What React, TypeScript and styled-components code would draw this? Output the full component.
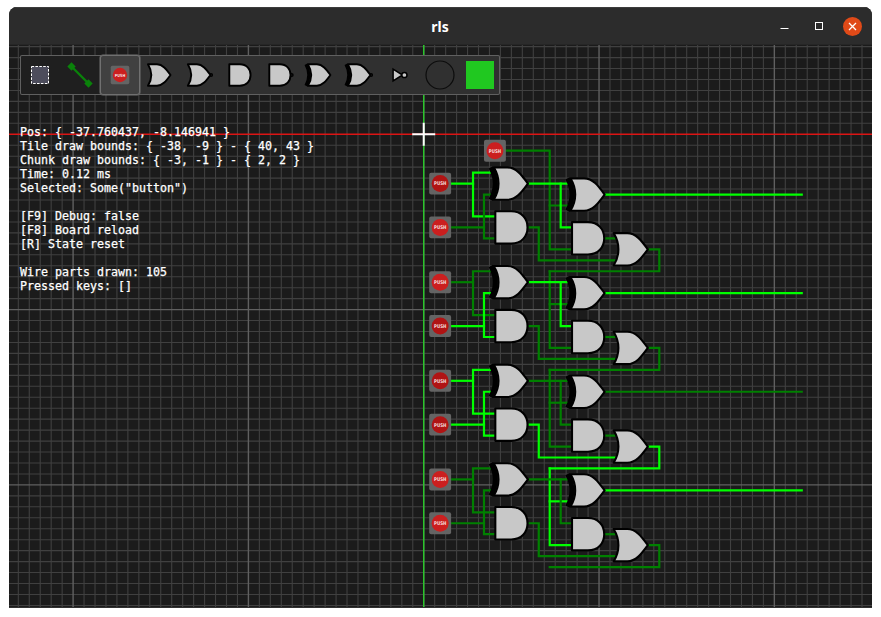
import React from "react";
import styled, { createGlobalStyle } from "styled-components";

const GlobalStyle = createGlobalStyle`
  body { margin: 0; background: #fff; overflow: hidden; }
  * { box-sizing: border-box; }
`;

const Page = styled.div`
  width: 881px;
  height: 617px;
  padding: 7px 9px 9px;
  background: #fff;
`;

const AppWindow = styled.div`
  display: flex;
  flex-direction: column;
  width: 863px;
  height: 601px;
  border-radius: 8px 8px 0 0;
  overflow: hidden;
  background: #1b1b1b;
`;

const TitleBar = styled.header`
  display: grid;
  grid-template-columns: 1fr auto 1fr;
  align-items: center;
  flex: none;
  height: 38px;
  padding: 0 10px 0 9px;
  background: #2c2c2c;
  border-top: 1px solid #3c3c3c;
  border-bottom: 1px solid #262626;
`;

const Title = styled.h1`
  grid-column: 2;
  margin: 1px 0 0;
  color: #fff;
  font: 700 14px/18px "Noto Sans", "Open Sans", sans-serif;
`;

const WindowControls = styled.div`
  display: flex;
  justify-content: flex-end;
  align-items: center;
  gap: 15px;
`;

const ControlButton = styled.button<{ $close?: boolean }>`
  display: flex;
  width: 19px;
  height: 19px;
  padding: 0;
  border: 0;
  border-radius: 50%;
  background: ${(p) => (p.$close ? "#e04a18" : "transparent")};
`;

const Viewport = styled.main`
  display: grid;
  flex: 1;
  min-height: 0;
  > * { grid-area: 1 / 1; }
`;

const BoardCanvas = styled.svg`
  display: block;
  width: 863px;
  height: 563px;
`;

const Overlay = styled.div`
  z-index: 1;
  padding: 10px 11px;
`;

const Toolbar = styled.nav`
  display: flex;
  width: 480px;
  height: 40px;
  background: linear-gradient(90deg, #1f1f1f 0 80px, #303030 80px);
  border-radius: 2px;
  box-shadow: inset 0 0 0 1px #606060;
`;

const Tool = styled.button<{ $active?: boolean }>`
  width: 40px;
  height: 40px;
  padding: 0;
  border: 0;
  border-radius: 3px;
  background: ${(p) => (p.$active ? "#404040" : "transparent")};
  box-shadow: ${(p) => (p.$active ? "0 0 0 0.5px #707070, inset 0 0 0 1px #707070" : "none")};
  svg { display: block; }
`;

const DebugText = styled.pre`
  margin: 30px 0 0;
  color: #fff;
  font: 11.63px/14px "DejaVu Sans Mono", monospace;
  -webkit-text-stroke: 0.25px #fff;
`;

const T = 10.957;
const ORIGIN_X = 414.72;
const ORIGIN_Y = 89.28;
const ON = "#00ff00";
const OFF = "#008000";

type GateKind = "or" | "nor" | "and" | "nand" | "xor" | "xnor";

/* Gate bodies are centred on the origin, three tiles tall. */
function Gate({ kind, x, y, scale = 1 }: { kind: GateKind; x: number; y: number; scale?: number }) {
  const isAnd = kind === "and" || kind === "nand";
  const isX = kind === "xor" || kind === "xnor";
  const negated = kind === "nor" || kind === "nand" || kind === "xnor";
  return (
    <g transform={`translate(${x} ${y}) scale(${scale})`} stroke="#000" strokeWidth={scale < 1 ? 2.9 : 2.1} strokeLinejoin="round">
      {negated && <circle cx="18" cy="0" r="2" fill="#333" strokeWidth="2.2" />}
      {isAnd ? (
        <path d="M-15.9-16.2H0C10.3-16.2 16.3-9 16.3 0S10.3 16.2 0 16.2H-15.9Z" fill="#c8c8c8" />
      ) : (
        <path d="M-17.2-16.2H-3.5C5-16.2 10.5-9 17 0C10.5 9 5 16.2-3.5 16.2H-17.2C-10.8 6-10.8-6-17.2-16.2Z" fill="#c8c8c8" />
      )}
      {isX && <path d="M-20.1-16.2C-14.3-5.5-14.3 5.5-20.1 16.2" fill="none" strokeWidth="4.8" />}
    </g>
  );
}

function PushButton({ x, y, pressed = false, size = 21.9 }: { x: number; y: number; pressed?: boolean; size?: number }) {
  return (
    <g transform={`translate(${x} ${y}) scale(${size / 21.9})`}>
      <rect x="-10.95" y="-10.95" width="21.9" height="21.9" rx="2" fill="#646464" />
      <circle r="8.5" fill={pressed ? "#b01414" : "#cb1f1f"} />
      <text y="1.9" textAnchor="middle" fontFamily="DejaVu Sans" fontWeight="700" fontSize="5" textLength="12.4" lengthAdjust="spacingAndGlyphs" fill="#f3dede">PUSH</text>
    </g>
  );
}

interface AdderState {
  a: boolean; b: boolean; sum: boolean; and: boolean; carry: boolean; out: boolean; cin: boolean;
}

const adders: AdderState[] = [
  { a: true, b: false, sum: true, and: false, cin: false, carry: false, out: true },
  { a: false, b: true, sum: true, and: false, cin: false, carry: false, out: true },
  { a: true, b: true, sum: false, and: true, cin: false, carry: true, out: false },
  { a: false, b: false, sum: false, and: false, cin: true, carry: false, out: true },
];

function Wire({ on, points }: { on: boolean; points: number[][] }) {
  return (
    <polyline
      points={points.map(([px, py]) => `${px * T},${py * T}`).join(" ")}
      fill="none"
      stroke={on ? ON : OFF}
      strokeWidth="2.2"
      strokeLinecap="square"
    />
  );
}

function Adder({ state: s, row }: { state: AdderState; row: number }) {
  return (
    <g transform={`translate(0 ${row * 9 * T})`}>
      <Wire on={s.a} points={[[2.5, 4.5], [4.5, 4.5]]} />
      <Wire on={s.a} points={[[6.4, 3.5], [4.5, 3.5], [4.5, 7.5], [6.6, 7.5]]} />
      <Wire on={s.b} points={[[2.5, 8.5], [5.5, 8.5]]} />
      <Wire on={s.b} points={[[6.4, 5.5], [5.5, 5.5], [5.5, 9.5], [6.6, 9.5]]} />
      <Wire on={s.cin} points={[[11.5, 6.5], [13.3, 6.5]]} />
      <Wire on={s.cin} points={row === 0 ? [[7, 1.5], [11.5, 1.5], [11.5, 10.5], [13.5, 10.5]] : [[11.5, 3.5], [11.5, 10.5], [13.5, 10.5]]} />
      <Wire on={s.sum} points={[[9.65, 4.5], [13.4, 4.5]]} />
      <Wire on={s.sum} points={[[12.5, 4.5], [12.5, 8.5], [13.5, 8.5]]} />
      <Wire on={s.and} points={[[9.65, 8.5], [10.5, 8.5], [10.5, 11.5], [17.6, 11.5]]} />
      <Wire on={false} points={[[16.65, 9.5], [17.6, 9.5]]} />
      <Wire on={s.out} points={[[16.65, 5.5], [34.5, 5.5]]} />
      <Wire on={s.carry} points={[[20.6, 10.5], [21.5, 10.5], [21.5, 12.5], [11.5, 12.5]]} />
    </g>
  );
}

function AdderParts({ state: s, row }: { state: AdderState; row: number }) {
  return (
    <g transform={`translate(0 ${row * 9 * T})`}>
      <PushButton x={1.5 * T} y={4.5 * T} pressed={s.a} />
      <PushButton x={1.5 * T} y={8.5 * T} pressed={s.b} />
      <Gate kind="xor" x={87.2} y={4.5 * T} />
      <Gate kind="and" x={87.5} y={8.5 * T} />
      <Gate kind="xor" x={87.2 + 7 * T} y={5.5 * T} />
      <Gate kind="and" x={87.5 + 7 * T} y={9.5 * T} />
      <Gate kind="or" x={207.1} y={10.5 * T} />
    </g>
  );
}

const range = (from: number, to: number) => Array.from({ length: to - from + 1 }, (_, i) => from + i);

function Board() {
  return (
    <BoardCanvas viewBox="0 0 863 563">
      <rect width="863" height="563" fill="#1b1b1b" />
      <g transform={`translate(${ORIGIN_X} ${ORIGIN_Y})`}>
        {range(-37, 40).map((i) => i % 16 !== 0 && <path key={`v${i}`} d={`M${i * T} -90V475`} stroke="#404040" strokeWidth="1.1" />)}
        {range(-8, 43).map((i) => i % 16 !== 0 && <path key={`h${i}`} d={`M-415 ${i * T}H450`} stroke="#404040" strokeWidth="1.1" />)}
        {range(-2, 2).map((i) => <path key={`cv${i}`} d={`M${i * 16 * T} -90V475`} stroke="#606060" strokeWidth="1.4" />)}
        {range(1, 2).map((i) => <path key={`ch${i}`} d={`M-415 ${i * 16 * T}H450`} stroke="#606060" strokeWidth="1.4" />)}
        <path d="M-415 0H450" stroke="#dc1414" strokeWidth="1.4" />
        <path d="M0 -90V475" stroke="#28c828" strokeWidth="1.4" />
        {adders.map((s, i) => <Adder key={i} state={s} row={i} />)}
        <PushButton x={6.5 * T} y={1.5 * T} />
        {adders.map((s, i) => <AdderParts key={i} state={s} row={i} />)}
        <path d="M-11.5 0H11.5M0-11.5V11.5" stroke="#fff" strokeWidth="2" />
      </g>
      <path d="M0 562.5H863" stroke="#303030" />
    </BoardCanvas>
  );
}

const tools: { name: string; icon: React.ReactNode }[] = [
  {
    name: "select",
    icon: <rect x="11.5" y="11.5" width="17" height="17" fill="#4d4d5c" stroke="#fff" strokeDasharray="2.6 1.3" />,
  },
  {
    name: "wire",
    icon: (
      <g fill="#0a820a">
        <path d="M11.5 11.5L28.5 28.5" stroke="#0a820a" strokeWidth="2.4" />
        <path d="M11.5 7.3L15.7 11.5L11.5 15.7L7.3 11.5ZM28.5 24.3L32.7 28.5L28.5 32.7L24.3 28.5Z" />
      </g>
    ),
  },
  { name: "button", icon: <PushButton x={20} y={20} size={18.6} /> },
  { name: "or", icon: <Gate kind="or" x={19.3} y={20} scale={0.66} /> },
  { name: "nor", icon: <Gate kind="nor" x={19.2} y={20} scale={0.66} /> },
  { name: "and", icon: <Gate kind="and" x={19.8} y={20} scale={0.66} /> },
  { name: "nand", icon: <Gate kind="nand" x={19.8} y={20} scale={0.66} /> },
  { name: "xor", icon: <Gate kind="xor" x={19.2} y={20} scale={0.66} /> },
  { name: "xnor", icon: <Gate kind="xnor" x={19.2} y={20} scale={0.66} /> },
  {
    name: "not",
    icon: (
      <g fill="#c8c8c8" stroke="#000" strokeWidth="1.5">
        <path d="M13.1 14.2L22.5 20L13.1 25.8Z" />
        <circle cx="24.4" cy="20" r="2.6" />
      </g>
    ),
  },
  { name: "lamp", icon: <circle cx="20" cy="20" r="14" fill="none" stroke="#0c0c0c" strokeWidth="1.2" /> },
  { name: "pixel", icon: <rect x="6" y="6" width="28" height="28" fill="#20c820" /> },
];

const debugLines = [
  "Pos: { -37.760437, -8.146941 }",
  "Tile draw bounds: { -38, -9 } - { 40, 43 }",
  "Chunk draw bounds: { -3, -1 } - { 2, 2 }",
  "Time: 0.12 ms",
  'Selected: Some("button")',
  "",
  "[F9] Debug: false",
  "[F8] Board reload",
  "[R] State reset",
  "",
  "Wire parts drawn: 105",
  "Pressed keys: []",
];

export default function App() {
  return (
    <Page>
      <GlobalStyle />
      <AppWindow>
        <TitleBar>
          <Title>rls</Title>
          <WindowControls>
            <ControlButton aria-label="Minimize">
              <svg width="19" height="19"><path d="M5.5 11.5H13.5" stroke="#fff" /></svg>
            </ControlButton>
            <ControlButton aria-label="Maximize">
              <svg width="19" height="19"><rect x="6.5" y="5.5" width="7" height="7" fill="none" stroke="#fff" /></svg>
            </ControlButton>
            <ControlButton $close aria-label="Close">
              <svg width="19" height="19"><path d="M6 6L13 13M13 6L6 13" stroke="#fff" strokeWidth="1.3" /></svg>
            </ControlButton>
          </WindowControls>
        </TitleBar>
        <Viewport>
          <Board />
          <Overlay>
            <Toolbar>
              {tools.map((tool) => (
                <Tool key={tool.name} $active={tool.name === "button"} aria-label={tool.name}>
                  <svg width="40" height="40">{tool.icon}</svg>
                </Tool>
              ))}
            </Toolbar>
            <DebugText>{debugLines.join("\n")}</DebugText>
          </Overlay>
        </Viewport>
      </AppWindow>
    </Page>
  );
}
